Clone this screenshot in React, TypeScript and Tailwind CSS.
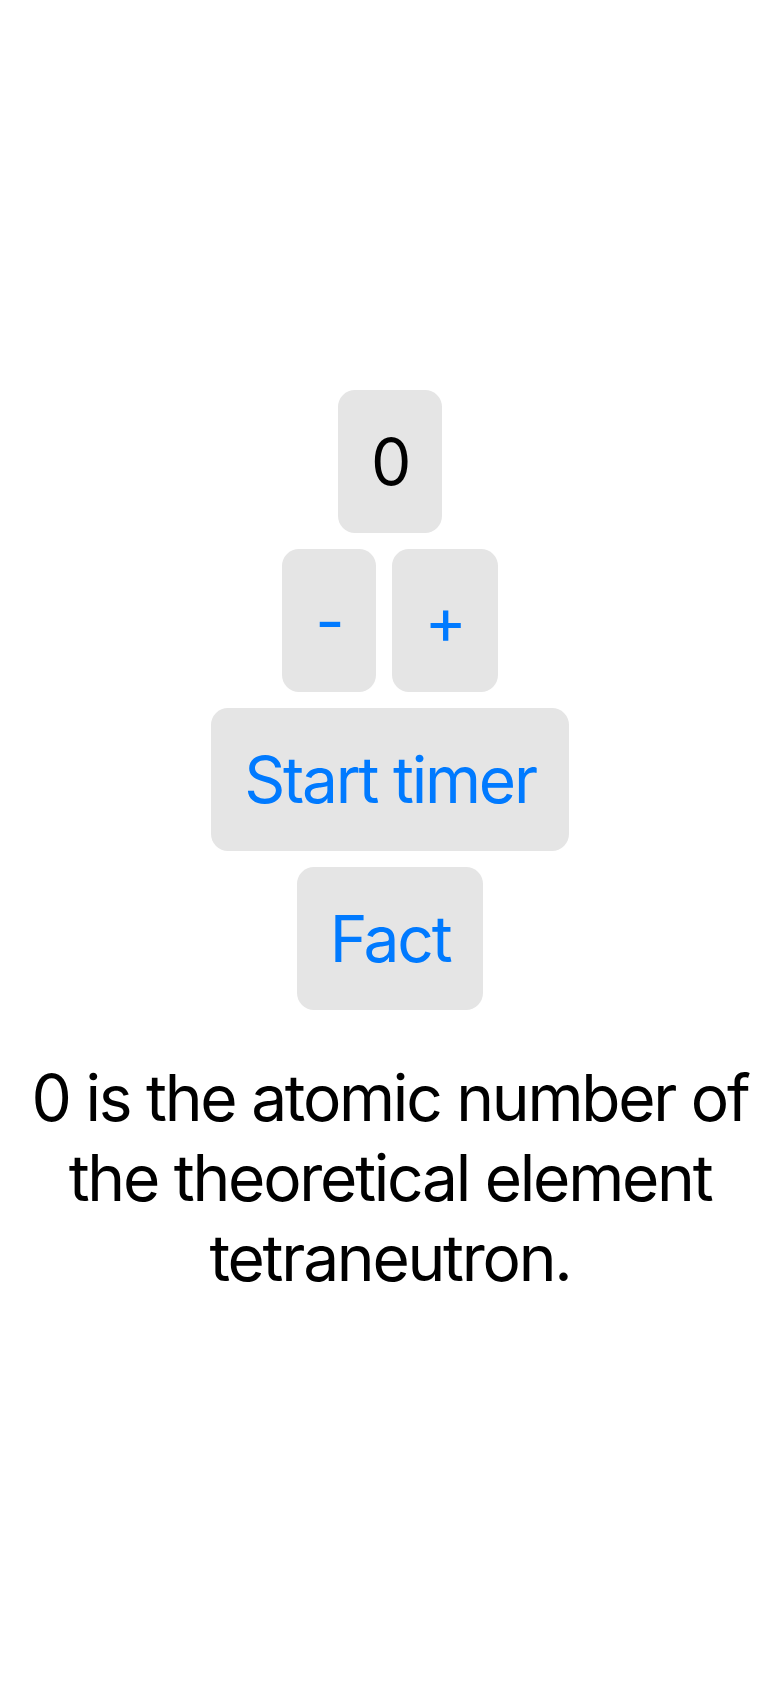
import React, { useState } from "react";

const font = { fontFamily: "Inter, 'Noto Sans', sans-serif" };

const Btn = ({ children, onClick, className = "" }: { children: React.ReactNode; onClick?: () => void; className?: string }) => (
  <button onClick={onClick} className={`bg-[#e5e5e5] rounded-[17px] px-[33px] py-8 text-[64px] leading-[79px] tracking-[-0.035em] text-[#007aff] ${className}`}>
    {children}
  </button>
);

export default function App() {
  const [count, setCount] = useState(0);

  return (
    <div style={font} className="min-h-screen w-full bg-white flex flex-col items-center justify-center">
      <div className="bg-[#e5e5e5] rounded-[17px] px-[33px] py-8 text-[64px] leading-[79px] tracking-[-0.035em] text-black">{count}</div>
      <div className="flex gap-4 mt-4">
        <Btn onClick={() => setCount(c => c - 1)}>-</Btn>
        <Btn onClick={() => setCount(c => c + 1)}>+</Btn>
      </div>
      <Btn className="mt-4">Start timer</Btn>
      <Btn className="mt-4">Fact</Btn>
      <p className="mt-12 px-6 text-center text-[64px] leading-[80px] tracking-[-0.035em] text-black">
        {count} is the atomic number of the theoretical element tetraneutron.
      </p>
    </div>
  );
}
